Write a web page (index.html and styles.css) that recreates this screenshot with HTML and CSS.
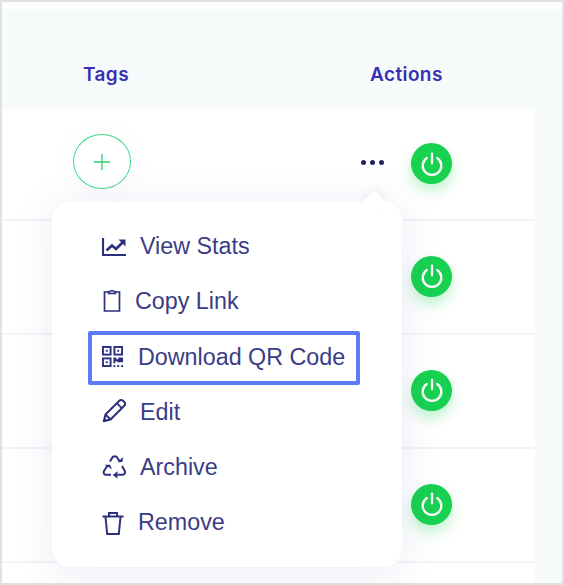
FILE: index.html
```html
<!DOCTYPE html>
<html lang="en">
<head>
<meta charset="utf-8">
<title>Links</title>
<link rel="stylesheet" href="styles.css">
</head>
<body>
<svg class="defs" width="0" height="0" aria-hidden="true">
  <symbol id="power" viewBox="0 0 24 24"><path d="M7.200 6.400a8.600 8.600 0 1 0 9.600 0" fill="none" stroke="currentColor" stroke-width="2.100" stroke-linecap="round"/><path d="M12 2.400v9" fill="none" stroke="currentColor" stroke-width="2.100" stroke-linecap="round"/></symbol>
</svg>
<main class="frame">
  <div class="top-gap"></div>
  <header class="head">
    <span class="th th-tags">Tags</span>
    <span class="th th-actions">Actions</span>
  </header>
  <div class="body">
    <section class="table">
      <div class="row">
        <button class="add"><svg width="16" height="16" viewBox="0 0 16 16"><path d="M8 0v16M0 8h16" fill="none" stroke="currentColor" stroke-width="1.300"/></svg></button>
        <span class="dots"><i></i><i></i><i></i></span>
        <span class="power"><svg width="26" height="26"><use href="#power"/></svg></span>
      </div>
      <div class="row row-end"><span class="power"><svg width="26" height="26"><use href="#power"/></svg></span></div>
      <div class="row row-end"><span class="power"><svg width="26" height="26"><use href="#power"/></svg></span></div>
      <div class="row row-end"><span class="power"><svg width="26" height="26"><use href="#power"/></svg></span></div>
      <div class="foot"></div>
    </section>
    <div class="side"></div>
  </div>
  <nav class="menu">
    <span class="arrow"></span>
    <a class="item item-stats">
      <svg class="ico" width="24" height="24" viewBox="0 0 24 24"><path d="M1 3v17h23" fill="none" stroke="currentColor" stroke-width="2.200"/><path d="M4.500 15.500l5.500-5 4 3.500 7-7" fill="none" stroke="currentColor" stroke-width="2.600"/><path d="M16.500 4.500h7v7z" fill="currentColor"/></svg>
      <span>View Stats</span>
    </a>
    <a class="item item-copy">
      <svg class="ico" width="18" height="24" viewBox="0 0 18 24"><path d="M5 4H1.500v19h15V4H13" fill="none" stroke="currentColor" stroke-width="1.700"/><path d="M5.500 5.500V3.500H7.500a1.600 1.600 0 0 1 3 0h2v2z" fill="none" stroke="currentColor" stroke-width="1.500"/></svg>
      <span>Copy Link</span>
    </a>
    <a class="item item-qr">
      <svg class="ico" width="21" height="21" viewBox="0 0 22 22"><g fill="none" stroke="currentColor" stroke-width="2"><rect x="1" y="1" width="8" height="8"/><rect x="13" y="1" width="8" height="8"/><rect x="1" y="13" width="8" height="8"/></g><g fill="currentColor"><rect x="4" y="4" width="2" height="2"/><rect x="16" y="4" width="2" height="2"/><rect x="4" y="16" width="2" height="2"/><path d="M12 12h3v2h2v-2h5v5h-6v-1h-2v2h-2z"/><rect x="12" y="20" width="2" height="2"/><rect x="16" y="20" width="2" height="2"/><rect x="20" y="20" width="2" height="2"/></g></svg>
      <span class="qr-label">Download QR Code</span>
    </a>
    <a class="item item-edit">
      <svg class="ico" width="25" height="25" viewBox="0 0 25 25"><path d="M1.800 23.200l1.700-6.700L17.300 2.700a2.600 2.600 0 0 1 3.700 0l1.300 1.300a2.600 2.600 0 0 1 0 3.700L8.500 21.500z" fill="none" stroke="currentColor" stroke-width="2" stroke-linejoin="round"/><path d="M14.800 5.200l5 5M3.500 16.500l5 5" fill="none" stroke="currentColor" stroke-width="1.800"/><path d="M1.800 23.200l.8-3.400 2.600 2.600z" fill="currentColor"/></svg>
      <span>Edit</span>
    </a>
    <a class="item item-archive">
      <svg class="ico" width="25" height="25" viewBox="0 0 25 25"><g fill="none" stroke="currentColor" stroke-width="2" stroke-linejoin="round"><path d="M8 7.500l3-5h3.500l3 4.500"/><path d="M5.500 11.500L2 17c-1 2 .3 3.800 2 3.800h5"/><path d="M15.500 20.800h5c2 0 3.300-2 2.300-3.800l-2.800-5"/></g><g fill="currentColor"><path d="M15.300 8.300l5-.3 1-4.900z"/><path d="M2.800 10.200l5.400.8 1.200 5z" transform="rotate(-10 6 12)"/><path d="M15.500 17.300v7.200l-4.800-3.600z"/></g></svg>
      <span>Archive</span>
    </a>
    <a class="item item-remove">
      <svg class="ico" width="22" height="24" viewBox="0 0 22 24"><g fill="none" stroke="currentColor" stroke-width="2"><path d="M.5 5.500h21"/><path d="M7 5V2h8v3"/><path d="M3.500 6l1.700 17h11.600L18.500 6"/></g></svg>
      <span>Remove</span>
    </a>
  </nav>
</main>
</body>
</html>
```
FILE: styles.css
```css
*, *::before, *::after { box-sizing: border-box; }
html, body { margin: 0; padding: 0; }
body { width: 564px; height: 585px; background: #fff; overflow: hidden; }
.defs { position: absolute; }
.frame {
  position: relative;
  width: 564px;
  height: 585px;
  border: 2px solid #e1e1e1;
  display: flex;
  flex-direction: column;
  background: #fff;
  font-family: "Liberation Sans", Arial, sans-serif;
}
.top-gap { height: 7px; background: #fff; }
.head {
  height: 99px;
  background: #f7fafb;
  display: flex;
  align-items: flex-start;
  padding: 55px 0 0 81px;
  font-family: Inter, sans-serif;
  font-weight: 600;
  font-size: 19px;
  letter-spacing: .4px;
  line-height: 22px;
  color: #3730b3;
}
.th-tags { width: 287px; }
.body { flex: 1; display: flex; min-height: 0; }
.table { width: 533px; display: flex; flex-direction: column; }
.side { flex: 1; background: #f7fafb; }
.row {
  height: 114px;
  flex: none;
  border-bottom: 2px solid #f3f4f8;
  display: flex;
  align-items: center;
  position: relative;
  padding-left: 71px;
}
.row:first-child { height: 113px; }
.row-end { padding-left: 409px; padding-bottom: 2px; }
.foot { flex: 1; }
.add {
  width: 58px;
  height: 55px;
  margin-top: -4px;
  border: 1.500px solid #3fdc87;
  border-radius: 50%;
  background: #fff;
  color: #2fd078;
  padding: 0;
  display: flex;
  align-items: center;
  justify-content: center;
  box-shadow: 0 0 24px rgba(120, 120, 200, .05);
}
.dots { display: flex; gap: 4px; margin-left: 230px; margin-top: -2px; width: 50px; }
.dots i { width: 5px; height: 5px; border-radius: 50%; background: #23235f; }
.power {
  width: 41px;
  height: 41px;
  border-radius: 50%;
  background: #17d150;
  color: #fff;
  display: flex;
  align-items: center;
  justify-content: center;
  box-shadow: 0 7px 14px rgba(23, 209, 80, .28);
}
.menu {
  position: absolute;
  left: 50px;
  top: 200px;
  width: 350px;
  height: 365px;
  padding: 17px 0 0 36px;
  background: #fff;
  border-radius: 18px;
  box-shadow: 0 4px 40px rgba(80, 80, 170, .12);
  display: flex;
  flex-direction: column;
  color: #3a3d86;
  font-size: 23.300px;
}
.arrow {
  position: absolute;
  left: 313px;
  top: -8px;
  width: 18px;
  height: 18px;
  background: #fff;
  transform: rotate(45deg);
  box-shadow: -3px -3px 6px rgba(80, 80, 170, .05);
}
.item {
  position: relative;
  height: 55.200px;
  flex: none;
  display: flex;
  align-items: center;
  color: inherit;
  text-decoration: none;
  white-space: nowrap;
}
.ico { flex: none; color: #2d2f7d; }
.item-stats { gap: 14px; padding-left: 14px; }
.item-copy { gap: 14px; padding-left: 15px; }
.item-copy .ico { margin-top: -4px; }
.item-qr { gap: 15px; padding-left: 14px; }
.qr-label { padding-top: 2px; }
.item-qr::before {
  content: "";
  position: absolute;
  left: 0;
  top: 1.600px;
  width: 272px;
  height: 54px;
  border: 4px solid #5c7bf6;
  border-radius: 2px;
}
.item-edit { gap: 13px; padding-left: 14px; }
.item-edit .ico { margin-top: -3px; }
.item-archive { gap: 13px; padding-left: 14px; }
.item-archive .ico { margin-top: -2px; }
.item-remove { gap: 14px; padding-left: 14px; }
```
